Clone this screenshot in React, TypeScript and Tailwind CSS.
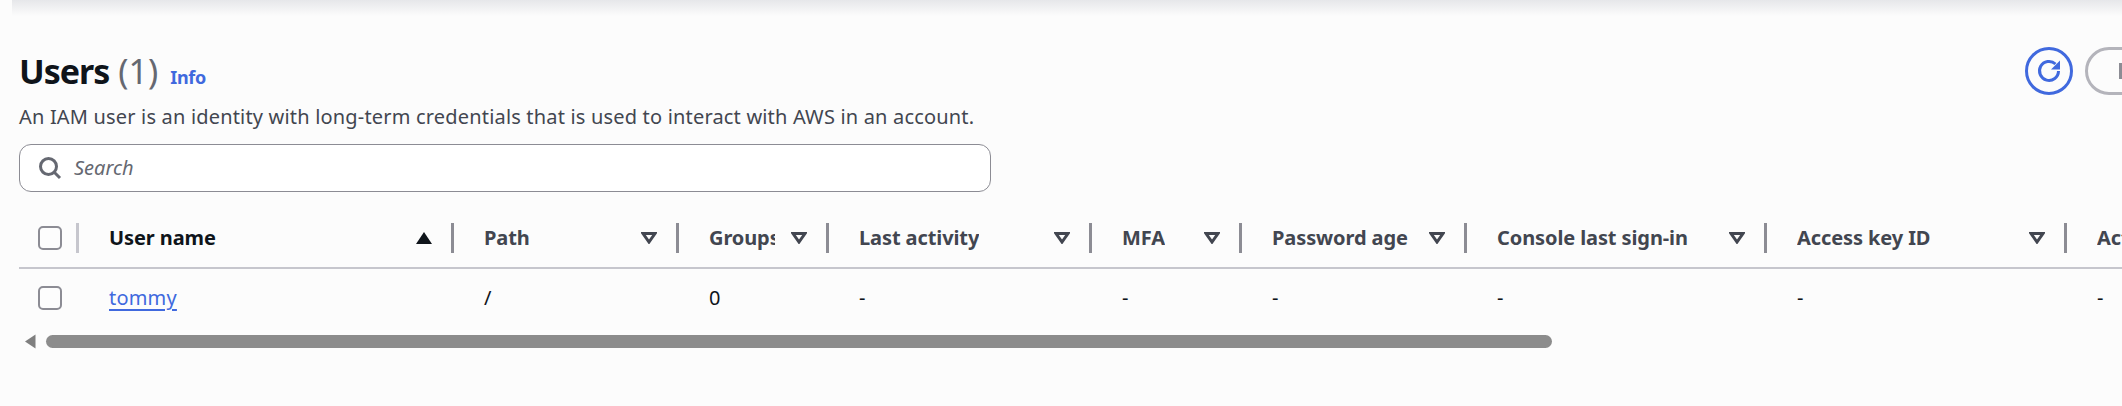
import React from "react";

const columns = [
  { label: "User name", width: "w-[375px]", sorted: true, cell: "tommy" },
  { label: "Path", width: "w-[225px]", cell: "/" },
  { label: "Groups", width: "w-[150px]", cell: "0" },
  { label: "Last activity", width: "w-[263px]", cell: "-" },
  { label: "MFA", width: "w-[150px]", cell: "-" },
  { label: "Password age", width: "w-[225px]", cell: "-" },
  { label: "Console last sign-in", width: "w-[300px]", cell: "-" },
  { label: "Access key ID", width: "w-[300px]", cell: "-" },
  { label: "Active key age", width: "w-[225px]", cell: "-" },
];

function SortIcon({ filled }: { filled?: boolean }) {
  return (
    <svg width="16" height="12" viewBox="0 0 16 12" className="shrink-0">
      {filled ? (
        <path d="M8 0 L16 12 L0 12 Z" fill="#0f141a" />
      ) : (
        <path d="M2 1.5 L14 1.5 L8 10 Z" fill="none" stroke="#424650" strokeWidth="3" strokeLinejoin="miter" />
      )}
    </svg>
  );
}

function Checkbox() {
  return <div className="w-[24px] h-[24px] shrink-0 rounded-[5px] border-2 border-[#8c8c94] bg-[#fdfdfd]" />;
}

export default function App() {
  return (
    <div className="w-[2122px] h-[406px] overflow-hidden bg-[#fcfcfc] font-['Noto_Sans',sans-serif]">
      <div className="h-[16px] ml-[12px] bg-gradient-to-b from-[#e6e7ea] to-[#fcfcfc]" />

      <div className="mt-[31px] pl-[19px] flex items-start justify-between">
        <div className="flex items-baseline h-[47px] leading-[49px]">
          <h1 className="text-[34px] font-bold tracking-[-1px] text-[#0f141a]">Users</h1>
          <span className="ml-[9px] text-[34px] text-[#656871]">(1)</span>
          <span className="ml-[12px] text-[18px] font-bold tracking-[-0.3px] text-[#4069de]">Info</span>
        </div>
        <div className="flex gap-[12px] items-center -mr-[123px]">
          <div className="w-[48px] h-[48px] rounded-full border-[3px] border-[#4069de] flex items-center justify-center">
            <svg width="26" height="26" viewBox="0 0 26 26" fill="none">
              <path d="M22.5 13a9.5 9.5 0 1 1-3-7" stroke="#4069de" strokeWidth="3" />
              <path d="M24 2.5v9h-9z" fill="#4069de" />
            </svg>
          </div>
          <div className="w-[160px] h-[48px] rounded-[24px] border-[3px] border-[#b4b4bb] flex items-center pl-[31px]">
            <div className="w-[3px] h-[16px] bg-[#8c8c94]" />
          </div>
        </div>
      </div>

      <p className="mt-[8px] pl-[19px] text-[20px] tracking-[0.18px] leading-[28px] text-[#424650] whitespace-nowrap">
        An IAM user is an identity with long-term credentials that is used to interact with AWS in an account.
      </p>

      <div className="mt-[13px] ml-[19px] w-[972px] h-[48px] rounded-[12px] border border-[#8c8c94] bg-white flex items-center pl-[18px]">
        <svg width="24" height="24" viewBox="0 0 24 24" fill="none" className="shrink-0">
          <circle cx="10.5" cy="10.5" r="8" stroke="#656871" strokeWidth="3" />
          <path d="M16 16l6 6" stroke="#656871" strokeWidth="3" />
        </svg>
        <span className="ml-[12px] text-[20px] italic text-[#656871]">Search</span>
      </div>

      <div className="mt-[31px] ml-[19px] w-[2200px] h-[46px] border-b-2 border-[#c6c6cd] flex items-start">
        <div className="w-[60px] h-[30px] shrink-0 flex items-center pl-[19px] justify-between">
          <Checkbox />
          <div className="w-[3px] h-[30px] bg-[#c6c6cd]" />
        </div>
        {columns.map((c, i) => (
          <div
            key={c.label}
            className={`${c.width} flex items-center justify-between h-[30px] shrink-0 pl-[30px] pr-[19px] border-r-[3px] border-[#8c8c94]`}
          >
            <span
              className={
                i === 0
                  ? "text-[20px] font-bold tracking-[-0.1px] text-[#0f141a] whitespace-nowrap"
                  : "text-[20px] font-bold tracking-[-0.1px] text-[#424650] whitespace-nowrap overflow-hidden min-w-0"
              }
            >
              {c.label}
            </span>
            <span className="ml-[16px] shrink-0">
              <SortIcon filled={c.sorted} />
            </span>
          </div>
        ))}
      </div>

      <div className="ml-[19px] w-[2200px] h-[66px] flex items-start pt-[17px]">
        <div className="w-[60px] h-[24px] shrink-0 pl-[19px]">
          <Checkbox />
        </div>
        {columns.map((c, i) => (
          <div key={c.label} className={`${c.width} shrink-0 pl-[30px] text-[20px] leading-[24px] text-[#0f141a]`}>
            {i === 0 ? <span className="text-[#4069de] tracking-[0.2px] underline underline-offset-[4px] decoration-2">{c.cell}</span> : c.cell}
          </div>
        ))}
      </div>

      <div className="ml-[24px] flex items-center gap-[10px] h-[13px]">
        <svg width="12" height="15" viewBox="0 0 12 15" className="shrink-0">
          <path d="M11.5 0.5V14.5L1 7.5Z" fill="#7f7f7f" />
        </svg>
        <div className="w-[1506px] h-[13px] rounded-full bg-[#8c8c8c]" />
      </div>
    </div>
  );
}
